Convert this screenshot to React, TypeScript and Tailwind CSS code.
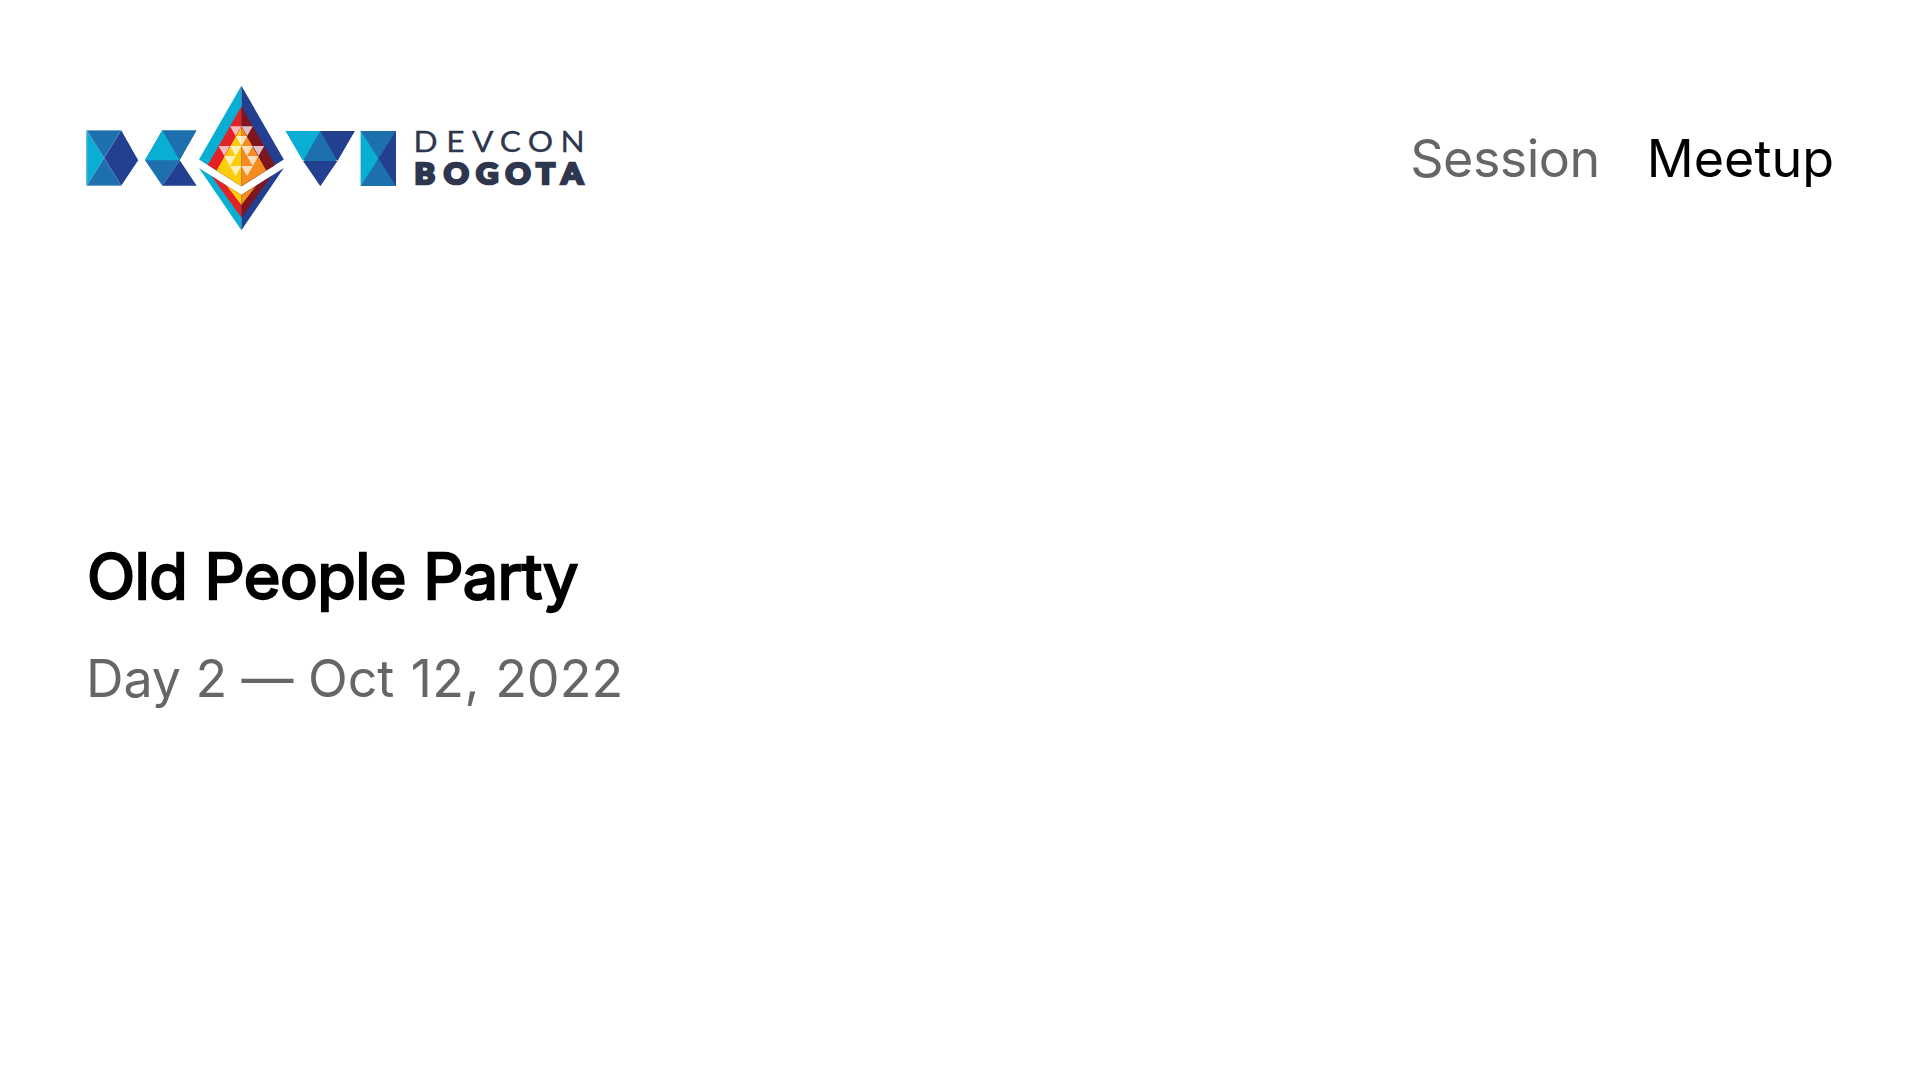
const CREAM_L = '#fff0bd';
const CREAM_R = '#fde0c0';
const PINK_L = '#f3b9bd';
const PINK_R = '#dcc0c6';

const tri = (x: number, y: number) => `M${x} ${y}h11.4l-5.7 9.9z`;

function Logo() {
  return (
    <svg className="block" width="502" height="146" viewBox="86 85 502 146" role="img" aria-label="Devcon Bogota">
      <g>
        <path fill="#1d6fae" d="M86.6 130.3H121L138 160.3 121 185.8H86.6z" />
        <path fill="#09aed3" d="M86.6 130.3L104 158 86.6 185.8z" />
        <path fill="#22408f" d="M121 130.3L138 160.3 121 185.8 104 158z" />
        <path stroke="#8dbcdc" strokeOpacity=".75" strokeWidth=".7" fill="none" d="M121 130.5H86.9V185.4H121M86.9 130.5L121 185.4M121 130.5L86.9 185.4" />
      </g>
      <g>
        <path fill="#1d6fae" d="M162.3 130.3H196.7L179.7 160.3 162.3 185.8 145 160.3z" />
        <path fill="#09aed3" d="M162.3 130.3L179.7 160.3H145z" />
        <path fill="#22408f" d="M179.7 160.3L196.7 185.8H162.3z" />
      </g>
      <g>
        <path fill="#09aed3" d="M241.4 85.7L199 159.5 241.4 186.3z" />
        <path fill="#22408f" d="M241.4 85.7L283.8 159.5 241.4 186.3z" />
        <path fill="#e32227" d="M241.4 106.5L207.7 165 241.4 186.3z" />
        <path fill="#7f151d" d="M241.4 106.5L275.1 165 241.4 186.3z" />
        <path fill="#fccd0c" d="M241.4 126.8L216.6 170.6 241.4 186.3z" />
        <path fill="#f68c1f" d="M241.4 126.8L266.2 170.6 241.4 186.3z" />
        <path fill={PINK_L} d={tri(230, 126.2) + tri(218.6, 146)} />
        <path fill={PINK_R} d={tri(241.4, 126.2) + tri(252.8, 146)} />
        <path fill={CREAM_L} d={tri(235.7, 136.1) + tri(230, 146) + tri(224.3, 156) + tri(230, 166)} />
        <path fill={CREAM_R} d={'M241.4 136.1h5.7l-5.7 9.9z' + tri(241.4, 146) + tri(247.1, 156) + tri(241.4, 166)} />
      </g>
      <g>
        <path fill="#09aed3" d="M199 168L241.4 195V230.2z" />
        <path fill="#22408f" d="M283.8 168L241.4 195V230.2z" />
        <path fill="#e32227" d="M211.5 176L241.4 195V217.5z" />
        <path fill="#7f151d" d="M271.3 176L241.4 195V217.5z" />
        <path fill="#fccd0c" d="M226.5 185.5L241.4 195V205z" />
        <path fill="#f68c1f" d="M256.3 185.5L241.4 195V205z" />
      </g>
      <g>
        <path fill="#1d6fae" d="M285.6 131H354.8L320.3 185.9z" />
        <path fill="#09aed3" d="M285.6 131H320.3L303 161z" />
        <path fill="#22408f" d="M320.3 131H354.8L337.5 161zM303 161H337.5L320.3 185.9z" />
      </g>
      <g>
        <path fill="#1d6fae" d="M360.8 131H396V186H360.8z" />
        <path fill="#09aed3" d="M360.8 131L378.4 158.4 360.8 186z" />
        <path fill="#22408f" d="M396 131L378.4 158.4 396 186z" />
      </g>
      <g fill="#2e364d" stroke="#2e364d" fontFamily="Lato, sans-serif" transform="scale(1.08 1)">
        <text y="151.9" fontSize="29.3" strokeWidth=".3" x="382.9 413.1 437 462.8 488.7 518.9">DEVCON</text>
        <text y="184.3" fontSize="28.6" fontWeight="900" strokeWidth="2.6" x="383.7 411 440.8 468 496.5 519.6">BOGOTA</text>
      </g>
    </svg>
  );
}

export default function App() {
  return (
    <main className="flex h-screen flex-col overflow-hidden bg-white px-[86px] pt-[85px] font-['Inter',sans-serif] text-black">
      <header className="flex items-start justify-between">
        <Logo />
        <nav className="flex gap-[47px] pt-[42px] text-[52px] leading-[64px]">
          <span className="tracking-[-0.5px] text-[#666]">Session</span>
          <span>Meetup</span>
        </nav>
      </header>
      <section className="mt-[307px]">
        <h1 className="pl-px text-[63px] font-normal leading-[77px] tracking-[-0.57px] [-webkit-text-stroke:2.3px_black]">Old People Party</h1>
        <p className="mt-[32px] text-[52px] leading-[64px] text-[#666]">
          <span className="tracking-[-0.1px]">Day 2 — Oct </span>
          <span className="ml-[2px] tracking-[0.5px]">12, </span>
          <span>2022</span>
        </p>
      </section>
    </main>
  );
}
